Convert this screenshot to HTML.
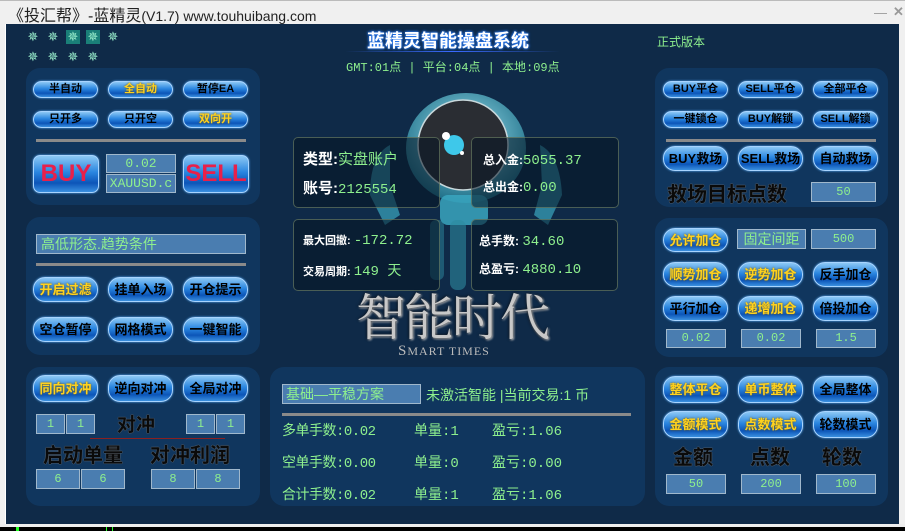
<!DOCTYPE html>
<html><head><meta charset="utf-8"><style>
*{margin:0;padding:0;box-sizing:border-box}
body{width:905px;height:531px;overflow:hidden;background:#0f2a48;font-family:"Liberation Sans","Noto Sans CJK SC",sans-serif;position:relative}
.a{position:absolute}
.p{position:absolute;background:#10365e;border-radius:14px}
.b{position:absolute;border-radius:10px;background:linear-gradient(#8cc8f5 0%,#2a86e0 45%,#0c55b8 75%,#3a90e0 100%);border:1px solid #a8d4ff;box-shadow:0 0 2px #5ab0ff;color:#000;font-weight:bold;font-size:11px;text-align:center;white-space:nowrap;line-height:15px}
.B{font-size:13px;line-height:23px;border-radius:12px}
.y{color:#ffd21e;text-shadow:0 0 2px #7a5a00}
.box{position:absolute;background:#4a7db0;border:1px solid #a0b8cc;color:#8ef08e;font-size:12px;text-align:center;font-family:"Liberation Mono","Noto Sans CJK SC",monospace}
.g{color:#8ef08e}
.dv{position:absolute;height:3px;background:#8a8a8a}
.lbl{position:absolute;color:#0a0a0a;font-weight:bold;text-shadow:0 0 1px #777,0 0 1px #777;white-space:nowrap}
.info{position:absolute;background:rgba(5,20,35,.55);border:1px solid rgba(140,160,120,.5);border-radius:5px}
.t{position:absolute;white-space:nowrap}
.st{position:absolute;width:14px;height:14px;color:#9ec;font-size:13px;line-height:14px;text-align:center}
</style></head><body>
<div class="a" style="left:0;top:0;width:905px;height:24px;background:#f0f0f0;border-top:1px solid #bbb"></div>
<div class="t" style="left:8px;top:2px;font-size:16px;color:#222">《投汇帮》-蓝精灵<span style="font-size:14px">(V1.7) www.touhuibang.com</span></div>
<div class="t" style="left:874px;top:5px;font-size:13px;color:#999">—</div>
<div class="t" style="left:893px;top:4px;font-size:13px;color:#999;font-weight:bold">✕</div>
<div class="a" style="left:0;top:24px;width:6px;height:503px;background:#f0f0f0;border-right:1px solid #fff"></div>
<div class="a" style="left:899px;top:24px;width:6px;height:503px;background:#f0f0f0"></div>
<div class="a" style="left:0;top:524px;width:905px;height:3px;background:#eee"></div>
<div class="a" style="left:0;top:527px;width:905px;height:4px;background:#000"></div>
<div class="a" style="left:16px;top:527px;width:3px;height:4px;background:#2f2"></div>
<div class="a" style="left:106px;top:527px;width:1px;height:4px;background:#2f2"></div>
<div class="a" style="left:112px;top:527px;width:1px;height:4px;background:#2f2"></div>

<div class="st" style="left:26px;top:30px">✵</div><div class="st" style="left:46px;top:30px">✵</div>
<div class="st" style="left:66px;top:30px;background:#1a7f78">✵</div><div class="st" style="left:86px;top:30px;background:#1a7f78">✵</div>
<div class="st" style="left:106px;top:30px">✵</div>
<div class="st" style="left:26px;top:50px">✵</div><div class="st" style="left:46px;top:50px">✵</div>
<div class="st" style="left:66px;top:50px">✵</div><div class="st" style="left:86px;top:50px">✵</div>

<div class="t" style="left:367px;top:27px;font-size:18px;font-weight:bold;color:#fff;text-shadow:0 0 3px #2a7fff,0 0 2px #2a7fff">蓝精灵智能操盘系统</div>
<div class="a" style="left:345px;top:51px;width:215px;height:1px;background:linear-gradient(90deg,transparent,#3a6aff,transparent)"></div>
<div class="t g" style="left:346px;top:58px;font-size:12px;font-family:'Liberation Mono','Noto Sans CJK SC',monospace">GMT:01点 | 平台:04点 | 本地:09点</div>
<div class="t g" style="left:657px;top:33px;font-size:12px">正式版本</div>

<svg class="a" style="left:290px;top:85px" width="340" height="220">
<defs><radialGradient id="rg" cx="50%" cy="40%" r="60%"><stop offset="0" stop-color="#9ee4f2"/><stop offset="1" stop-color="#1f6f88"/></radialGradient></defs>
<ellipse cx="176" cy="63" rx="60" ry="55" fill="url(#rg)"/>
<circle cx="173" cy="60" r="45" fill="#2a2d33" stroke="#c8d8dc" stroke-width="1.5"/>
<circle cx="164" cy="60" r="10" fill="#3ec8ea"/>
<circle cx="156" cy="51" r="4" fill="#fff"/><circle cx="172" cy="68" r="2" fill="#fff"/>
<path d="M100 60 Q80 70 80 110 L95 140 L110 130 L100 100 Z" fill="#3aa6bf" opacity=".7"/>
<path d="M250 60 Q270 70 272 110 L258 140 L244 130 L252 100 Z" fill="#3aa6bf" opacity=".7"/>
<rect x="150" y="110" width="48" height="30" rx="8" fill="#3aa6bf" opacity=".85"/>
<rect x="160" y="135" width="16" height="70" rx="7" fill="#2d8aa0" opacity=".6"/>
<rect x="140" y="135" width="14" height="60" rx="6" fill="#2d8aa0" opacity=".5"/>
</svg>

<div class="info" style="left:293px;top:137px;width:147px;height:71px"></div>
<div class="info" style="left:471px;top:137px;width:148px;height:71px"></div>
<div class="info" style="left:293px;top:219px;width:147px;height:72px"></div>
<div class="info" style="left:471px;top:219px;width:147px;height:72px"></div>
<div class="t" style="left:303px;top:148px;font-size:15px;color:#fff;font-weight:bold">类型:<span class="g" style="font-weight:normal">实盘账户</span></div>
<div class="t" style="left:303px;top:177px;font-size:15px;color:#fff;font-weight:bold">账号:<span class="g" style="font-weight:normal;font-family:'Liberation Mono',monospace;font-size:14px">2125554</span></div>
<div class="t" style="left:483px;top:151px;font-size:12px;color:#fff;font-weight:bold">总入金:<span class="g" style="font-weight:normal;font-size:14px;font-family:'Liberation Mono',monospace">5055.37</span></div>
<div class="t" style="left:483px;top:178px;font-size:12px;color:#fff;font-weight:bold">总出金:<span class="g" style="font-weight:normal;font-size:14px;font-family:'Liberation Mono',monospace">0.00</span></div>
<div class="t" style="left:303px;top:232px;font-size:11px;color:#fff;font-weight:bold">最大回撤: <span class="g" style="font-weight:normal;font-size:14px;font-family:'Liberation Mono',monospace">-172.72</span></div>
<div class="t" style="left:303px;top:260px;font-size:11px;color:#fff;font-weight:bold">交易周期: <span class="g" style="font-weight:normal;font-size:14px;font-family:'Liberation Mono','Noto Sans CJK SC',monospace">149 天</span></div>
<div class="t" style="left:479px;top:232px;font-size:12px;color:#fff;font-weight:bold">总手数: <span class="g" style="font-weight:normal;font-size:14px;font-family:'Liberation Mono',monospace">34.60</span></div>
<div class="t" style="left:479px;top:260px;font-size:12px;color:#fff;font-weight:bold">总盈亏: <span class="g" style="font-weight:normal;font-size:14px;font-family:'Liberation Mono',monospace">4880.10</span></div>
<div class="t" style="left:356px;top:286px;font-size:50px;line-height:56px;color:#c8c8c8;font-family:'Noto Serif CJK SC',serif;text-shadow:0 0 3px #000,1px 1px 2px #fff;letter-spacing:-2px">智能时代</div>
<div class="t" style="left:398px;top:343px;font-size:15px;color:#bbb;font-family:'Liberation Serif',serif;letter-spacing:1px">S<span style="font-size:12px">MART TIMES</span></div>

<div class="p" style="left:26px;top:68px;width:234px;height:137px"></div>
<div class="b" style="left:33px;top:81px;width:65px;height:17px">半自动</div>
<div class="b y" style="left:108px;top:81px;width:65px;height:17px">全自动</div>
<div class="b" style="left:183px;top:81px;width:65px;height:17px">暂停EA</div>
<div class="b" style="left:33px;top:111px;width:65px;height:17px">只开多</div>
<div class="b" style="left:108px;top:111px;width:65px;height:17px">只开空</div>
<div class="b y" style="left:183px;top:111px;width:65px;height:17px">双向开</div>
<div class="dv" style="left:36px;top:139px;width:210px"></div>
<div class="b" style="left:33px;top:155px;width:66px;height:38px;border-radius:7px;font-size:24px;line-height:36px;color:#e8204a">BUY</div>
<div class="b" style="left:183px;top:155px;width:66px;height:38px;border-radius:7px;font-size:24px;line-height:36px;color:#e8204a">SELL</div>
<div class="box" style="left:106px;top:154px;width:70px;height:19px;line-height:17px;font-size:13px">0.02</div>
<div class="box" style="left:106px;top:174px;width:70px;height:19px;line-height:17px;font-size:13px">XAUUSD.c</div>

<div class="p" style="left:26px;top:217px;width:234px;height:138px"></div>
<div class="box" style="left:36px;top:234px;width:210px;height:20px;text-align:left;padding-left:4px;font-size:14px;line-height:18px;font-family:'Liberation Sans','Noto Sans CJK SC',sans-serif">高低形态.趋势条件</div>
<div class="dv" style="left:36px;top:263px;width:210px"></div>
<div class="b B y" style="left:33px;top:277px;width:65px;height:25px">开启过滤</div>
<div class="b B" style="left:108px;top:277px;width:65px;height:25px">挂单入场</div>
<div class="b B" style="left:183px;top:277px;width:65px;height:25px">开仓提示</div>
<div class="b B" style="left:33px;top:317px;width:65px;height:25px">空仓暂停</div>
<div class="b B" style="left:108px;top:317px;width:65px;height:25px">网格模式</div>
<div class="b B" style="left:183px;top:317px;width:65px;height:25px">一键智能</div>

<div class="p" style="left:26px;top:367px;width:234px;height:139px"></div>
<div class="b B y" style="left:33px;top:375px;width:65px;height:27px;line-height:25px">同向对冲</div>
<div class="b B" style="left:108px;top:375px;width:65px;height:27px;line-height:25px">逆向对冲</div>
<div class="b B" style="left:183px;top:375px;width:65px;height:27px;line-height:25px">全局对冲</div>
<div class="box" style="left:36px;top:414px;width:29px;height:20px;line-height:18px">1</div>
<div class="box" style="left:66px;top:414px;width:29px;height:20px;line-height:18px">1</div>
<div class="box" style="left:186px;top:414px;width:29px;height:20px;line-height:18px">1</div>
<div class="box" style="left:216px;top:414px;width:29px;height:20px;line-height:18px">1</div>
<div class="lbl" style="left:117px;top:410px;font-size:19px">对冲</div>
<div class="a" style="left:90px;top:438px;width:135px;height:1px;background:#8a2020"></div>
<div class="lbl" style="left:43px;top:439px;font-size:20px">启动单量</div>
<div class="lbl" style="left:150px;top:439px;font-size:20px">对冲利润</div>
<div class="box" style="left:36px;top:469px;width:44px;height:20px;line-height:18px">6</div>
<div class="box" style="left:81px;top:469px;width:44px;height:20px;line-height:18px">6</div>
<div class="box" style="left:151px;top:469px;width:44px;height:20px;line-height:18px">8</div>
<div class="box" style="left:196px;top:469px;width:44px;height:20px;line-height:18px">8</div>

<div class="p" style="left:270px;top:367px;width:375px;height:139px"></div>
<div class="box" style="left:282px;top:384px;width:139px;height:20px;text-align:left;padding-left:3px;font-size:14px;line-height:18px;font-family:'Liberation Sans','Noto Sans CJK SC',sans-serif">基础—平稳方案</div>
<div class="t g" style="left:426px;top:385px;font-size:14px">未激活智能 |当前交易:1 币</div>
<div class="dv" style="left:282px;top:413px;width:349px"></div>
<div class="t g" style="left:282px;top:424px;font-size:14px;line-height:16px;letter-spacing:-.5px;font-family:'Liberation Mono','Noto Sans CJK SC',monospace">多单手数:0.02<br><br>空单手数:0.00<br><br>合计手数:0.02</div>
<div class="t g" style="left:414px;top:424px;font-size:14px;line-height:16px;font-family:'Liberation Mono','Noto Sans CJK SC',monospace">单量:1<br><br>单量:0<br><br>单量:1</div>
<div class="t g" style="left:492px;top:424px;font-size:14px;line-height:16px;font-family:'Liberation Mono','Noto Sans CJK SC',monospace">盈亏:1.06<br><br>盈亏:0.00<br><br>盈亏:1.06</div>

<div class="p" style="left:655px;top:68px;width:233px;height:139px"></div>
<div class="b" style="left:663px;top:81px;width:65px;height:17px">BUY平仓</div>
<div class="b" style="left:738px;top:81px;width:65px;height:17px">SELL平仓</div>
<div class="b" style="left:813px;top:81px;width:65px;height:17px">全部平仓</div>
<div class="b" style="left:663px;top:111px;width:65px;height:17px">一键锁仓</div>
<div class="b" style="left:738px;top:111px;width:65px;height:17px">BUY解锁</div>
<div class="b" style="left:813px;top:111px;width:65px;height:17px">SELL解锁</div>
<div class="dv" style="left:666px;top:139px;width:210px"></div>
<div class="b B" style="left:663px;top:146px;width:65px;height:25px">BUY救场</div>
<div class="b B" style="left:738px;top:146px;width:65px;height:25px">SELL救场</div>
<div class="b B" style="left:813px;top:146px;width:65px;height:25px">自动救场</div>
<div class="lbl" style="left:667px;top:178px;font-size:20px">救场目标点数</div>
<div class="box" style="left:811px;top:182px;width:65px;height:20px;line-height:18px">50</div>

<div class="p" style="left:655px;top:218px;width:233px;height:139px"></div>
<div class="b B y" style="left:663px;top:228px;width:65px;height:24px">允许加仓</div>
<div class="box" style="left:737px;top:229px;width:69px;height:20px;font-size:14px;line-height:18px;font-family:'Liberation Sans','Noto Sans CJK SC',sans-serif">固定间距</div>
<div class="box" style="left:811px;top:229px;width:65px;height:20px;line-height:18px">500</div>
<div class="b B y" style="left:663px;top:262px;width:65px;height:25px">顺势加仓</div>
<div class="b B y" style="left:738px;top:262px;width:65px;height:25px">逆势加仓</div>
<div class="b B" style="left:813px;top:262px;width:65px;height:25px">反手加仓</div>
<div class="b B" style="left:663px;top:296px;width:65px;height:25px">平行加仓</div>
<div class="b B y" style="left:738px;top:296px;width:65px;height:25px">递增加仓</div>
<div class="b B" style="left:813px;top:296px;width:65px;height:25px">倍投加仓</div>
<div class="box" style="left:666px;top:329px;width:60px;height:19px;line-height:17px">0.02</div>
<div class="box" style="left:741px;top:329px;width:60px;height:19px;line-height:17px">0.02</div>
<div class="box" style="left:816px;top:329px;width:60px;height:19px;line-height:17px">1.5</div>

<div class="p" style="left:655px;top:367px;width:233px;height:139px"></div>
<div class="b B y" style="left:663px;top:376px;width:65px;height:27px;line-height:25px">整体平仓</div>
<div class="b B y" style="left:738px;top:376px;width:65px;height:27px;line-height:25px">单币整体</div>
<div class="b B" style="left:813px;top:376px;width:65px;height:27px;line-height:25px">全局整体</div>
<div class="b B y" style="left:663px;top:411px;width:65px;height:27px;line-height:25px">金额模式</div>
<div class="b B y" style="left:738px;top:411px;width:65px;height:27px;line-height:25px">点数模式</div>
<div class="b B" style="left:813px;top:411px;width:65px;height:27px;line-height:25px">轮数模式</div>
<div class="lbl" style="left:673px;top:441px;font-size:20px">金额</div>
<div class="lbl" style="left:750px;top:441px;font-size:20px">点数</div>
<div class="lbl" style="left:822px;top:441px;font-size:20px">轮数</div>
<div class="box" style="left:666px;top:474px;width:60px;height:20px;line-height:18px">50</div>
<div class="box" style="left:741px;top:474px;width:60px;height:20px;line-height:18px">200</div>
<div class="box" style="left:816px;top:474px;width:60px;height:20px;line-height:18px">100</div>
</body></html>
